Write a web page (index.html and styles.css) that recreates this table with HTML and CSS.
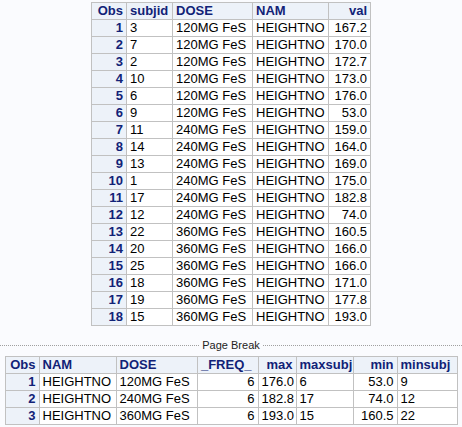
FILE: index.html
```html
<!DOCTYPE html>
<html>
<head>
<meta charset="utf-8">
<link rel="stylesheet" href="styles.css">
</head>
<body>
<table class="tbl t1">
<colgroup><col class="c-obs1"><col class="c-subj"><col class="c-dose1"><col class="c-nam1"><col class="c-val"></colgroup>
<thead>
<tr><th class="r">Obs</th><th class="l">subjid</th><th class="l">DOSE</th><th class="l">NAM</th><th class="r">val</th></tr>
</thead>
<tbody>
<tr><th class="r">1</th><td>3</td><td>120MG FeS</td><td>HEIGHTNO</td><td class="r">167.2</td></tr>
<tr><th class="r">2</th><td>7</td><td>120MG FeS</td><td>HEIGHTNO</td><td class="r">170.0</td></tr>
<tr><th class="r">3</th><td>2</td><td>120MG FeS</td><td>HEIGHTNO</td><td class="r">172.7</td></tr>
<tr><th class="r">4</th><td>10</td><td>120MG FeS</td><td>HEIGHTNO</td><td class="r">173.0</td></tr>
<tr><th class="r">5</th><td>6</td><td>120MG FeS</td><td>HEIGHTNO</td><td class="r">176.0</td></tr>
<tr><th class="r">6</th><td>9</td><td>120MG FeS</td><td>HEIGHTNO</td><td class="r">53.0</td></tr>
<tr><th class="r">7</th><td>11</td><td>240MG FeS</td><td>HEIGHTNO</td><td class="r">159.0</td></tr>
<tr><th class="r">8</th><td>14</td><td>240MG FeS</td><td>HEIGHTNO</td><td class="r">164.0</td></tr>
<tr><th class="r">9</th><td>13</td><td>240MG FeS</td><td>HEIGHTNO</td><td class="r">169.0</td></tr>
<tr><th class="r">10</th><td>1</td><td>240MG FeS</td><td>HEIGHTNO</td><td class="r">175.0</td></tr>
<tr><th class="r">11</th><td>17</td><td>240MG FeS</td><td>HEIGHTNO</td><td class="r">182.8</td></tr>
<tr><th class="r">12</th><td>12</td><td>240MG FeS</td><td>HEIGHTNO</td><td class="r">74.0</td></tr>
<tr><th class="r">13</th><td>22</td><td>360MG FeS</td><td>HEIGHTNO</td><td class="r">160.5</td></tr>
<tr><th class="r">14</th><td>20</td><td>360MG FeS</td><td>HEIGHTNO</td><td class="r">166.0</td></tr>
<tr><th class="r">15</th><td>25</td><td>360MG FeS</td><td>HEIGHTNO</td><td class="r">166.0</td></tr>
<tr><th class="r">16</th><td>18</td><td>360MG FeS</td><td>HEIGHTNO</td><td class="r">171.0</td></tr>
<tr><th class="r">17</th><td>19</td><td>360MG FeS</td><td>HEIGHTNO</td><td class="r">177.8</td></tr>
<tr><th class="r">18</th><td>15</td><td>360MG FeS</td><td>HEIGHTNO</td><td class="r">193.0</td></tr>
</tbody>
</table>

<div class="pagebreak"><span class="pb-line"></span><span class="pb-label">Page Break</span><span class="pb-line"></span></div>

<table class="tbl t2">
<colgroup><col class="c-obs2"><col class="c-nam2"><col class="c-dose2"><col class="c-freq"><col class="c-max"><col class="c-maxs"><col class="c-min"><col class="c-mins"></colgroup>
<thead>
<tr><th class="r">Obs</th><th class="l">NAM</th><th class="l">DOSE</th><th class="r freq">_FREQ_</th><th class="r">max</th><th class="l">maxsubj</th><th class="r">min</th><th class="l">minsubj</th></tr>
</thead>
<tbody>
<tr><th class="r">1</th><td>HEIGHTNO</td><td>120MG FeS</td><td class="r">6</td><td class="r">176.0</td><td>6</td><td class="r">53.0</td><td>9</td></tr>
<tr><th class="r">2</th><td>HEIGHTNO</td><td>240MG FeS</td><td class="r">6</td><td class="r">182.8</td><td>17</td><td class="r">74.0</td><td>12</td></tr>
<tr><th class="r">3</th><td>HEIGHTNO</td><td>360MG FeS</td><td class="r">6</td><td class="r">193.0</td><td>15</td><td class="r">160.5</td><td>22</td></tr>
</tbody>
</table>
</body>
</html>
```

FILE: styles.css
```css
html, body {
  margin: 0;
  padding: 0;
  background: #fafbfe;
  font-family: "Liberation Sans", Arial, sans-serif;
}

.tbl {
  border-collapse: collapse;
  table-layout: fixed;
  margin: 2px auto 0;
  font-size: 13px;
}

.t1 { width: 280px; }
.t2 { width: 453px; }

.c-obs1 { width: 35px; }
.c-subj { width: 46px; }
.c-dose1 { width: 80px; }
.c-nam1 { width: 76px; }
.c-val { width: 42px; }

.c-obs2 { width: 34px; }
.c-nam2 { width: 77px; }
.c-dose2 { width: 81px; }
.c-freq { width: 61px; }
.c-max { width: 38px; }
.c-maxs { width: 57px; }
.c-min { width: 44px; }
.c-mins { width: 60px; }

.tbl th,
.tbl td {
  border: 1px solid #c1c1c1;
  padding: 0 3px;
  height: 16px;
  line-height: 16px;
  white-space: nowrap;
  overflow: visible;
}

.tbl th {
  background: #edf2f9;
  color: #112277;
  font-weight: bold;
}

.tbl td {
  background: #ffffff;
  color: #000000;
  text-align: left;
}

.tbl .r { text-align: right; }
.tbl .l { text-align: left; }
.tbl .freq { padding-right: 6px; }

.pagebreak {
  display: flex;
  align-items: center;
  height: 13px;
  margin: 13px 0 4px;
}

.pb-line {
  flex: 1;
  border-top: 1px dotted #a0a0a0;
}

.pb-label {
  font-size: 11px;
  line-height: 13px;
  color: #222222;
  padding: 0 3px;
}
```
